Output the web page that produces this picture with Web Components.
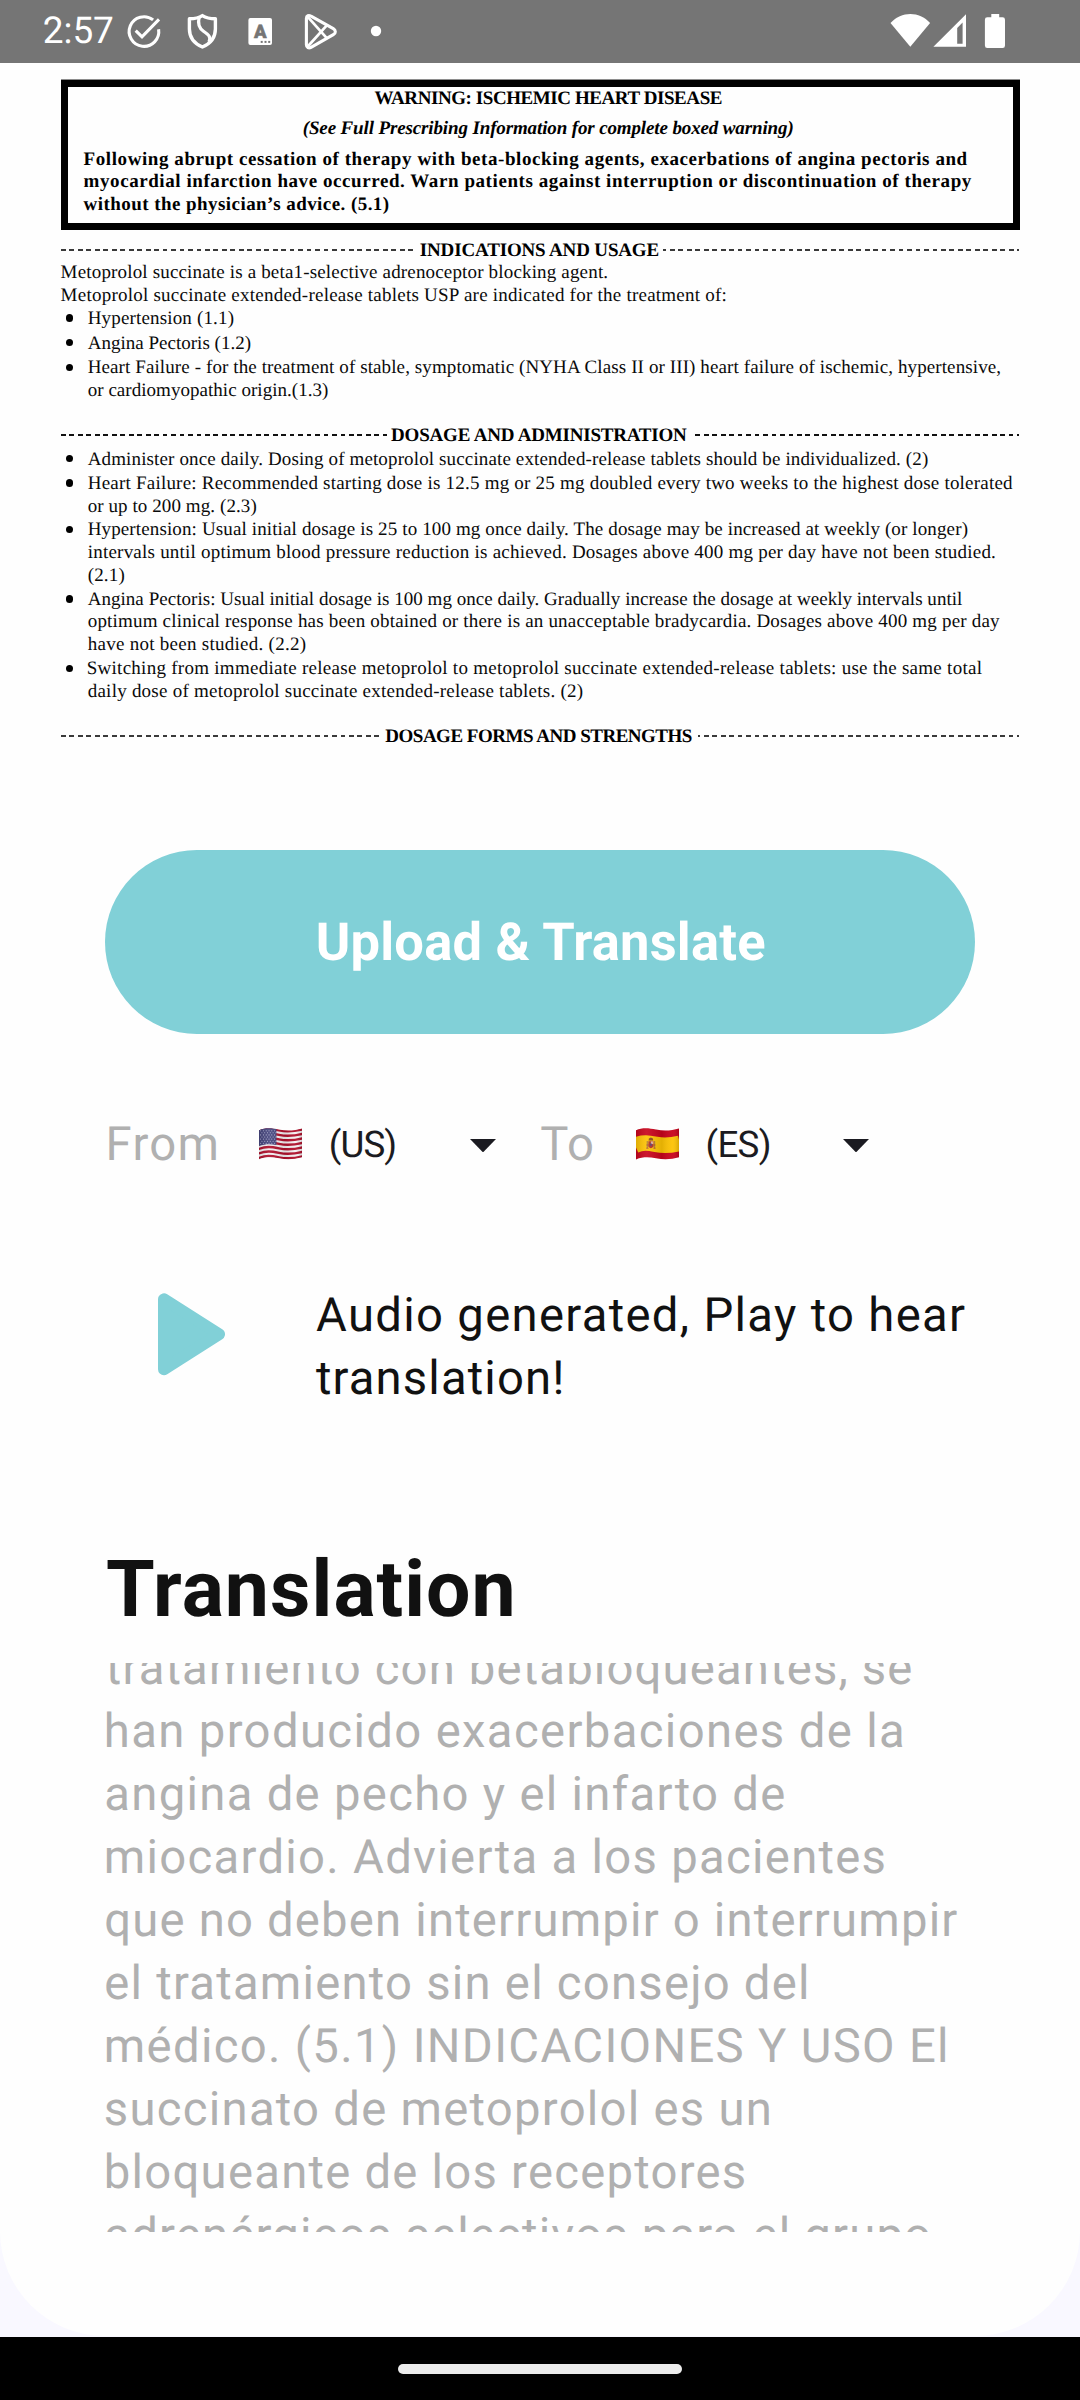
<!DOCTYPE html>
<html lang="en">
<head>
<meta charset="utf-8">
<title>Label translator</title>
<style>
html,body{margin:0;padding:0}
body{width:1080px;height:2400px;overflow:hidden;background:#f9f8ff;font-family:Roboto,"Noto Sans",sans-serif;color:#111;text-rendering:geometricPrecision}
</style>
</head>
<body>
<translator-screen>
  <status-bar slot="status" time="2:57"></status-bar>

  <label-document>
    <boxed-warning>
      <ink-text x="307.3" w="347.2" h="30.4">WARNING: ISCHEMIC HEART DISEASE</ink-text>
      <ink-text x="235.4" w="490.7" h="30.6" style="font-style:italic">(See Full Prescribing Information for complete boxed warning)</ink-text>
      <ink-text x="16.3" w="884" h="22.4">Following abrupt cessation of therapy with beta-blocking agents, exacerbations of angina pectoris and</ink-text>
      <ink-text x="16.3" w="888.2" h="22.6">myocardial infarction have occurred. Warn patients against interruption or discontinuation of therapy</ink-text>
      <ink-text x="16.3" w="305.2" h="22">without the physician’s advice. (5.1)</ink-text>
    </boxed-warning>
    <doc-heading start="352.5" end="602.3" style="--h:22.3px;--dash:#3a3a3a"><ink-text x="7" w="238.7" h="22.3">INDICATIONS AND USAGE</ink-text></doc-heading>
    <ink-text x="0.3" w="546.7" h="22.7">Metoprolol succinate is a beta1-selective adrenoceptor blocking agent.</ink-text>
    <ink-text x="0.3" w="665" h="23.3">Metoprolol succinate extended-release tablets USP are indicated for the treatment of:</ink-text>
    <doc-item><ink-text w="146" h="24.7">Hypertension (1.1)</ink-text></doc-item>
    <doc-item><ink-text w="163" h="24.7">Angina Pectoris (1.2)</ink-text></doc-item>
    <doc-item>
      <ink-text w="912.6" h="22.3">Heart Failure - for the treatment of stable, symptomatic (NYHA Class II or III) heart failure of ischemic, hypertensive,</ink-text>
      <ink-text w="240.4" h="45.3">or cardiomyopathic origin.(1.3)</ink-text>
    </doc-item>
    <doc-heading start="326.3" end="633.6" style="--h:23.7px;--dash:#111"><ink-text x="4.5" w="296" h="23.7">DOSAGE AND ADMINISTRATION</ink-text></doc-heading>
    <doc-item><ink-text w="840.2" h="24.3">Administer once daily. Dosing of metoprolol succinate extended-release tablets should be individualized. (2)</ink-text></doc-item>
    <doc-item>
      <ink-text w="925.4" h="22.7">Heart Failure: Recommended starting dose is 12.5 mg or 25 mg doubled every two weeks to the highest dose tolerated</ink-text>
      <ink-text w="168.7" h="23.7">or up to 200 mg. (2.3)</ink-text>
    </doc-item>
    <doc-item>
      <ink-text w="880" h="22.3">Hypertension: Usual initial dosage is 25 to 100 mg once daily. The dosage may be increased at weekly (or longer)</ink-text>
      <ink-text w="907.4" h="23">intervals until optimum blood pressure reduction is achieved. Dosages above 400 mg per day have not been studied.</ink-text>
      <ink-text w="36.7" h="24.3">(2.1)</ink-text>
    </doc-item>
    <doc-item>
      <ink-text w="874.4" h="22.7">Angina Pectoris: Usual initial dosage is 100 mg once daily. Gradually increase the dosage at weekly intervals until</ink-text>
      <ink-text w="912.4" h="22.3">optimum clinical response has been obtained or there is an unacceptable bradycardia. Dosages above 400 mg per day</ink-text>
      <ink-text w="218" h="24.7">have not been studied. (2.2)</ink-text>
    </doc-item>
    <doc-item>
      <ink-text w="894" h="22.3">Switching from immediate release metoprolol to metoprolol succinate extended-release tablets: use the same total</ink-text>
      <ink-text w="495" h="45.4">daily dose of metoprolol succinate extended-release tablets. (2)</ink-text>
    </doc-item>
    <doc-heading start="319.5" end="637.3" style="--h:23px;--dash:#3a3a3a"><ink-text x="5.5" w="306.5" h="23">DOSAGE FORMS AND STRENGTHS</ink-text></doc-heading>
  </label-document>

  <primary-button><ink-text w="446.5" h="184">Upload &amp; Translate</ink-text></primary-button>

  <language-row></language-row>

  <audio-row>
    <ink-text w="649" h="63">Audio generated, Play to hear</ink-text>
    <ink-text w="245.2" h="63">translation!</ink-text>
  </audio-row>

  <translation-panel>
    <ink-text slot="title" x="2.6" w="405.7" h="92">Translation</ink-text>
    <ink-text x="1.5" w="805.5" h="63">tratamiento con betabloqueantes, se</ink-text>
    <ink-text x="2.5" w="796.2" h="63">han producido exacerbaciones de la</ink-text>
    <ink-text x="2" w="678" h="63">angina de pecho y el infarto de</ink-text>
    <ink-text x="2.5" w="777.8" h="63">miocardio. Advierta a los pacientes</ink-text>
    <ink-text x="2" w="851" h="63">que no deben interrumpir o interrumpir</ink-text>
    <ink-text x="2" w="699.7" h="63">el tratamiento sin el consejo del</ink-text>
    <ink-text x="2.5" w="838.3" h="63">médico. (5.1) INDICACIONES Y USO El</ink-text>
    <ink-text x="1.5" w="663" h="63">succinato de metoprolol es un</ink-text>
    <ink-text x="2.5" w="638" h="63">bloqueante de los receptores</ink-text>
    <ink-text x="2" w="822.8" h="63">adrenérgicos selectivos para el grupo</ink-text>
  </translation-panel>

  <gesture-bar slot="nav"></gesture-bar>
</translator-screen>

<script>
function component(name, html, setup) {
  customElements.define(name, class extends HTMLElement {
    connectedCallback() {
      if (this.shadowRoot) return;
      const root = this.attachShadow({ mode: 'open' });
      const t = document.createElement('template');
      t.innerHTML = html;
      root.append(t.content.cloneNode(true));
      if (setup) setup(this, root);
    }
  });
}

component('translator-screen', `
<style>
:host{display:flex;flex-direction:column;width:1080px;height:2400px}
main{flex:1;display:flex;flex-direction:column;background:#fefefe;border-radius:0 0 105px 105px;margin-bottom:1px}
</style>
<slot name="status"></slot><main><slot></slot></main><slot name="nav"></slot>`);

component('status-bar', `
<style>
:host{display:flex;box-sizing:border-box;height:63px;background:#757575;color:#fff;font-size:37px;justify-content:space-between;--dy:1px}
.g{display:flex} ink-text{width:79.5px}
svg{display:block}
</style>
<div class="g" style="padding-left:44.5px"><ink-text w="69.3" h="62.5"></ink-text>
<svg width="280" height="63" viewBox="124 0 280 63" fill="none" stroke="#fff" stroke-width="3.1">
  <path d="M153.1 19.9A14.8 14.8 0 1 0 158.6 29.3"/>
  <path d="M135.7 30.6L142 36.9L159 19.4"/>
  <path d="M202.4 15.6C198.5 18.2 194.5 18.8 189.4 18.8V29C189.4 37.5 194.8 43.8 202.4 47C210 43.8 215.4 37.5 215.4 29V18.8C210.3 18.8 206.3 18.2 202.4 15.6Z" stroke-width="3.4" stroke-linejoin="round"/>
  <path d="M199.2 17.2C197.2 25 199.5 28.5 203.5 31.3C208.5 34.8 211.3 36.6 209 41.8" stroke-width="3.2"/>
  <rect x="248.4" y="18" width="23.6" height="27" rx="2" fill="#fff" stroke="none"/>
  <text x="260.2" y="37.6" text-anchor="middle" font-family="Roboto,sans-serif" font-weight="900" font-size="18.5" fill="#757575" stroke="#757575" stroke-width=".5">A</text>
  <g fill="#757575" stroke="none"><rect x="260.7" y="40.9" width="2" height="2"/><rect x="264.5" y="40.9" width="2" height="2"/><rect x="268.2" y="40.9" width="2" height="2"/></g>
  <path d="M306.4 18.6C306.4 15.6 308.8 14.8 311 16.2L333.3 28.6C336 30.2 336 33.1 333.3 34.7L311 47.3C308.8 48.6 306.4 47.6 306.4 44.8Z" stroke-width="3.1"/>
  <path d="M307.3 16.4L326.8 38.2M307.3 47L326.8 25.3" stroke-width="2.7"/>
  <circle cx="376" cy="31" r="5.2" fill="#fff" stroke="none"/>
</svg></div>
<svg width="195" height="63" viewBox="885 0 195 63" fill="#fff">
  <path d="M890.5 23C901.5 11 919.3 11 930.1 23L910.3 46.7Z"/>
  <path fill-rule="evenodd" d="M966 14.2V46.8H933.4ZM962.6 22.4L957.2 28V43.7H962.6Z"/>
  <path d="M991.3 14H999.2V17.3H1002.6Q1005 17.3 1005 19.7V45.5Q1005 48 1002.6 48H987.3Q984.9 48 984.9 45.5V19.7Q984.9 17.3 987.3 17.3H991.3Z"/>
</svg>`, (el, root) => { root.querySelector('ink-text').textContent = el.getAttribute('time'); });

component('label-document', `
<style>
:host{display:flex;flex-direction:column;box-sizing:border-box;height:787px;padding:17px 60px 0 61px;font:19px "Liberation Serif",serif;color:#0a0a0a;--lh:22px;--dy:1px}
</style><slot></slot>`);

component('boxed-warning', `
<style>
:host{display:block;box-sizing:border-box;height:150px;border:7px solid #000;box-shadow:0 -1px 0 #8d8d8d;font-weight:bold;margin-bottom:8.6px;color:#000}
</style><slot></slot>`);

component('doc-heading', `
<style>
:host{display:flex;height:var(--h);font-weight:bold;color:#000}
i{height:2px;margin-top:10px}
.a{background:repeating-linear-gradient(90deg,var(--dash) 0 4.8px,#fefefe00 4.8px 8.47px)}
.b{background:repeating-linear-gradient(270deg,var(--dash) 0 1.8px,#fefefe00 1.8px 5.5px,var(--dash) 5.5px 8.47px)}
div{flex:none}
</style><i class="a"></i><div><slot></slot></div><i class="b"></i>`, (el, root) => {
  const s = +el.getAttribute('start'), e = +el.getAttribute('end');
  root.querySelector('.a').style.width = s + 'px';
  root.querySelector('div').style.width = (e - s) + 'px';
  root.querySelector('.b').style.width = (958.5 - e) + 'px';
});

component('doc-item', `
<style>
:host{display:flex}
b{flex:none;width:7.4px;height:7.4px;border-radius:50%;background:#000;margin:7.5px 14.6px 0 5px}
div{padding-left:0.4px}
</style><b></b><div><slot></slot></div>`);

component('primary-button', `
<style>
:host{display:flex;flex:none;box-sizing:border-box;width:870px;height:184px;margin-left:105px;padding-left:214.4px;border-radius:92px;background:#81d0d7;color:#fff;font-size:52.5px;font-weight:bold}
</style><slot></slot>`);

component('language-select', `
<style>
:host{display:flex;align-items:center;color:#1b1b21;font-size:36.75px}
ink-text{flex:none}
country-flag{margin-top:1px}
svg{display:block;margin-top:4px}
</style><country-flag></country-flag><ink-text h="63" style="margin-left:29.2px"></ink-text>
<svg width="26" height="13.4" viewBox="0 0 26 13.4"><path d="M0 0H26L13 13.4Z" fill="#1b1b21"/></svg>`, (el, root) => {
  root.querySelector('country-flag').setAttribute('country', el.getAttribute('country'));
  const t = root.querySelector('ink-text');
  t.textContent = el.getAttribute('label');
  t.setAttribute('w', el.getAttribute('w'));
  t.style.width = el.getAttribute('span') + 'px';
});

component('language-row', `
<style>
:host{display:flex;height:63px;margin-top:78px;padding-left:109.3px;font-size:47.25px;color:#b0b0b0;--dy:1px}
.f{width:150px}.t{width:94px}
language-select{margin-right:46.3px}
</style>
<ink-text class="f" w="108" h="63">From</ink-text>
<language-select country="us" label="(US)" w="64.5" span="138.2"></language-select>
<ink-text class="t" w="50.7" h="63">To</ink-text>
<language-select country="es" label="(ES)" w="62.3" span="135.3"></language-select>`);

component('country-flag', `
<style>:host{display:block;width:43px;height:32px} svg{display:block}</style>
<svg width="43" height="32" viewBox="0 0 43 32">
<defs>
<clipPath id="c"><path d="M0 2.2C7 -.8 13 .2 20 1.6C29 3.4 36 2.4 43 .5V29.3C36 31.2 29 32 20 30.3C13 29 7 28.7 0 31.4Z"/></clipPath>
<linearGradient id="s"><stop offset="0" stop-opacity=".12"/><stop offset=".25" stop-color="#fff" stop-opacity=".08"/><stop offset=".6" stop-opacity=".1"/><stop offset=".85" stop-color="#fff" stop-opacity=".05"/><stop offset="1" stop-opacity=".15"/></linearGradient>
</defs>
<g clip-path="url(#c)"><g id="art"></g><rect width="43" height="32" fill="url(#s)"/></g></svg>`, (el, root) => {
  const wave = y => `M-1 ${y + 1.9}C7 ${y - 1.6} 13 ${y - .4} 20 ${y + 1}C29 ${y + 2.8} 36 ${y + 1.9} 44 ${y - .2}`;
  const art = root.getElementById('art');
  let s = '';
  if (el.getAttribute('country') === 'us') {
    s = '<rect width="43" height="32" fill="#f4f0f2"/>';
    for (let i = 0; i < 7; i++) s += `<path d="${wave(1.4 + i * 4.5)}" fill="none" stroke="#b0102c" stroke-width="2.3"/>`;
    s += '<path d="M0 0H17.4V17C12 15.8 6 15.6 0 18Z" fill="#45457d"/>';
    for (let r = 0; r < 7; r++) for (let c = 0; c < 6; c++)
      s += `<circle cx="${1.6 + c * 2.8 + (r % 2) * 1.3}" cy="${2.7 + r * 2.1}" r=".55" fill="#b9b9d6"/>`;
  } else {
    s = '<rect width="43" height="32" fill="#c8041c"/>';
    s += `<path d="${wave(15.4)}" fill="none" stroke="#fdc304" stroke-width="15.6"/>`;
    s += '<path d="M10.6 13H12V20.3H10.6ZM17.8 13H19.2V20.3H17.8Z" fill="#b9852b"/><path d="M12.4 13.2H17.4V18.5Q14.9 22 12.4 18.5Z" fill="#b3332c"/><rect x="14.9" y="13.4" width="2.3" height="2.7" fill="#e3b0a0"/><rect x="14" y="15.6" width="1.8" height="2.2" fill="#3b4a8c"/><path d="M12.6 12.6L12.9 10.4L14.9 9.6L16.9 10.4L17.2 12.6Z" fill="#8d4a1c"/><path d="M10.2 20.2H12.6M17.4 20.2H19.6M10.4 17H19.4" stroke="#a33" stroke-width=".7"/>';
  }
  art.innerHTML = s;
});

component('audio-row', `
<style>
:host{display:flex;margin-top:108px;height:126px;font-size:47.25px;color:#111;padding-left:158px;--dy:1px}
svg{flex:none;margin:9.7px 91.7px 0 0}
</style>
<svg width="67" height="83" viewBox="0 0 67 83"><path d="M6 6.3V76.3L61 41.3Z" fill="#81d0d7" stroke="#81d0d7" stroke-width="12" stroke-linejoin="round"/></svg>
<div><slot></slot></div>`);

component('translation-panel', `
<style>
:host{display:block;margin:135px 105px 0}
.h{font-size:78.75px;font-weight:bold;color:#111;height:92px;margin-bottom:27px}
.v{height:569px;overflow:hidden;font-size:47.25px;color:#b0b0b0}
.i{margin-top:-26px}
</style><div class="h"><slot name="title"></slot></div><div class="v"><div class="i"><slot></slot></div></div>`);

component('gesture-bar', `
<style>
:host{display:flex;height:63px;background:#000;align-items:center;justify-content:center}
i{width:284px;height:10px;border-radius:5px;background:#ececec}
</style><i></i>`);

/* Single line whose letters are tracked so that its ink spans exactly w pixels, starting at x. */
const pen = document.createElement('canvas').getContext('2d');
component('ink-text', `
<style>
:host{display:block;white-space:nowrap}
span{display:block;padding-top:var(--dy,0)}
</style><span><slot></slot></span>`, (el, root) => {
  const cs = getComputedStyle(el), span = root.querySelector('span');
  const text = el.textContent.trim();
  pen.font = `${cs.fontStyle} ${cs.fontWeight} ${cs.fontSize} ${cs.fontFamily}`;
  pen.textRendering = 'geometricPrecision';
  const m = pen.measureText(text);
  const ink = m.actualBoundingBoxLeft + m.actualBoundingBoxRight;
  const h = +el.getAttribute('h');
  el.style.height = h + 'px';
  span.style.lineHeight = cs.getPropertyValue('--lh').trim() || h + 'px';
  span.style.letterSpacing = ((+el.getAttribute('w') - ink) / (text.length - 1)).toFixed(3) + 'px';
  span.style.marginLeft = (+(el.getAttribute('x') || 0) + m.actualBoundingBoxLeft - 0.7).toFixed(2) + 'px';
});
</script>
</body>
</html>
